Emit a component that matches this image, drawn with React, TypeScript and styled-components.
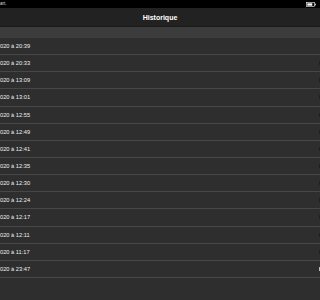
import React from "react";
import styled, { createGlobalStyle } from "styled-components";

const Global = createGlobalStyle`
  html, body { margin: 0; padding: 0; background: #2e2e2e; }
  body { width: 320px; height: 300px; overflow: hidden; font-family: "Liberation Sans", Arial, sans-serif; }
  #root { width: 320px; height: 300px; }
`;

const Screen = styled.div`
  width: 320px;
  height: 300px;
  display: flex;
  flex-direction: column;
  background: #2e2e2e;
  overflow: hidden;
`;

const StatusBar = styled.div`
  height: 8px;
  background: #000;
  display: flex;
  align-items: center;
  justify-content: space-between;
  padding: 0 4px 0 0;
  color: #fff;
  line-height: 8px;
`;

const StatusText = styled.span`
  font-size: 4.5px;
  color: #ddd;
`;

const Header = styled.div`
  height: 19px;
  background: #222222;
  display: flex;
  align-items: center;
  justify-content: center;
  color: #fff;
  font-weight: 700;
  font-size: 7px;
  border-bottom: 1px solid #1a1a1a;
  box-sizing: border-box;
`;

const SectionBand = styled.div`
  height: 11px;
  background: #3c3c3c;
`;

const List = styled.div`
  display: flex;
  flex-direction: column;
`;

const Row = styled.div`
  height: 17.15px;
  box-sizing: border-box;
  border-bottom: 1px solid #474747;
  display: flex;
  align-items: center;
  justify-content: space-between;
  color: #f0f0f0;
  font-size: 5.7px;
`;

const Label = styled.span`
  white-space: nowrap;
`;

const EdgeMark = styled.span<{ $light?: boolean }>`
  width: 1.5px;
  height: 4px;
  background: ${(p) => (p.$light ? "#bdbdbd" : "#202020")};
`;

const times = [
  "20:39", "20:33", "13:09", "13:01", "12:55", "12:49", "12:41",
  "12:35", "12:30", "12:24", "12:17", "12:11", "11:17", "23:47",
];

export default function App() {
  return (
    <Screen>
      <Global />
      <StatusBar>
        <StatusText>art.</StatusText>
        <svg width="10" height="5" viewBox="0 0 10 5">
          <rect x="0.5" y="0.5" width="8" height="4" fill="none" stroke="#fff" strokeWidth="0.6" />
          <rect x="1.3" y="1.3" width="5" height="2.4" fill="#fff" />
          <rect x="8.8" y="1.6" width="0.9" height="1.8" fill="#fff" />
        </svg>
      </StatusBar>
      <Header>Historique</Header>
      <SectionBand />
      <List>
        {times.map((t, i) => (
          <Row key={i}>
            <Label>020 à {t}</Label>
            {i > 0 && <EdgeMark $light={i === times.length - 1} />}
          </Row>
        ))}
      </List>
    </Screen>
  );
}
